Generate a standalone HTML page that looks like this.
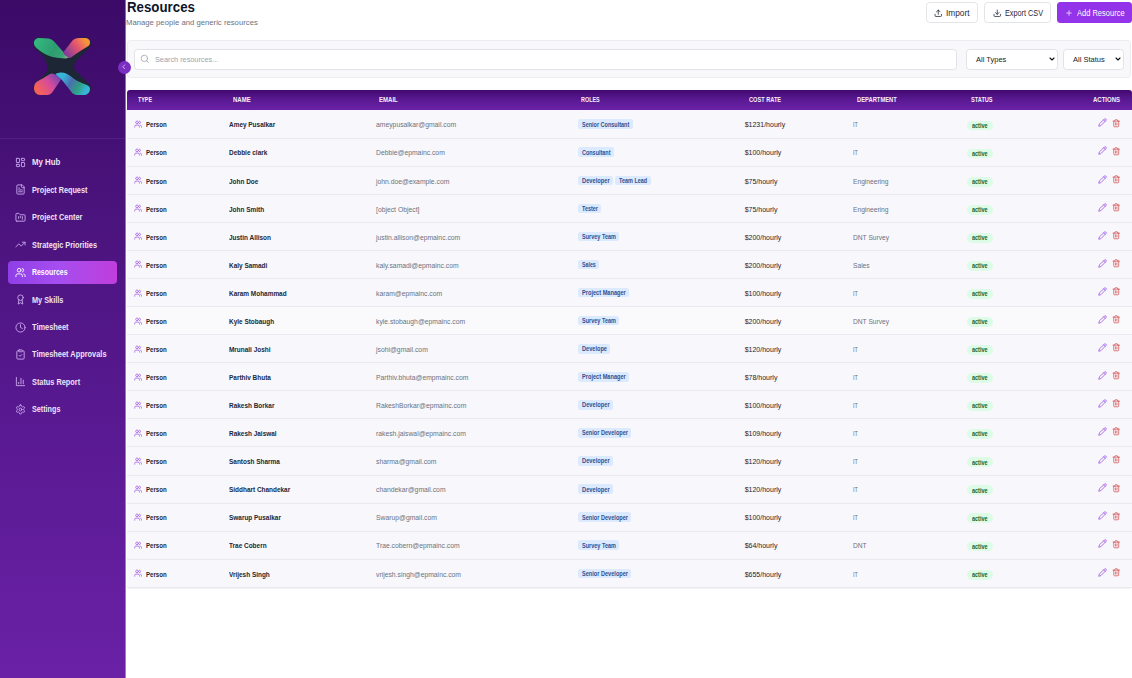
<!DOCTYPE html>
<html><head><meta charset="utf-8"><title>Resources</title>
<style>
html,body{margin:0;padding:0;}
body{width:1132px;height:678px;overflow:hidden;position:relative;background:#ffffff;font-family:"Liberation Sans", sans-serif;}
svg{display:block;overflow:visible;}
</style></head><body>
<div style="position:absolute;left:0px;top:0px;width:125px;height:678px;background:linear-gradient(180deg,#3b0a67 0%,#4a137c 30%,#5a1a93 65%,#6a21a6 100%);"></div>
<div style="position:absolute;left:125px;top:0px;width:1px;height:678px;opacity:0.6;background:linear-gradient(180deg,#3b0a67 0%,#4a137c 30%,#5a1a93 65%,#6a21a6 100%);"></div>
<div style="position:absolute;left:0px;top:137.5px;width:125.2px;height:1px;background:rgba(255,255,255,0.07);"></div>
<svg style="position:absolute;left:30px;top:34px" width="64" height="64" viewBox="0 0 64 64">
<defs>
<linearGradient id="gtl" gradientUnits="userSpaceOnUse" x1="6" y1="6" x2="38" y2="24"><stop offset="0" stop-color="#34b880"/><stop offset="0.55" stop-color="#2d9c70"/><stop offset="0.85" stop-color="#3aa678"/><stop offset="1" stop-color="#9fb08a"/></linearGradient>
<linearGradient id="gtr" gradientUnits="userSpaceOnUse" x1="58" y1="6" x2="36" y2="22"><stop offset="0.08" stop-color="#f7963a"/><stop offset="0.45" stop-color="#e6566e"/><stop offset="1" stop-color="#7c3aa0"/></linearGradient>
<linearGradient id="gbl" gradientUnits="userSpaceOnUse" x1="7" y1="58" x2="29" y2="41"><stop offset="0.08" stop-color="#f4615d"/><stop offset="0.55" stop-color="#d44b9c"/><stop offset="1" stop-color="#6c46b2"/></linearGradient>
<linearGradient id="gbr" gradientUnits="userSpaceOnUse" x1="58" y1="58" x2="27" y2="40"><stop offset="0.08" stop-color="#37b4d8"/><stop offset="0.3" stop-color="#2f9f80"/><stop offset="0.55" stop-color="#4a6fb0"/><stop offset="0.8" stop-color="#38b2d8"/><stop offset="1" stop-color="#38b8d8"/></linearGradient>
</defs>
<path d="M9.5 9.5 L54.5 54.5 M54.5 9.5 L9.5 54.5" stroke="#1d2635" stroke-width="13" stroke-linecap="round"/>
<path d="M11 17 L26 23 L40 23 L57 11 Q35 30 50 50 L40 44 L24 40 L15 47 Q21 32 11 17Z" fill="#1d2635"/>
<path d="M4 9 C4 5.5 6.5 4 9.5 4 L18.5 4.5 C21 4.8 23 6.5 25 8.5 L32 16.5 C34 18.5 37 20.5 41 22.5 L36 24.5 C30 24.5 24 23.8 18 21.5 C14 20 10 17 6.5 14 C4.8 12.5 4 11 4 9Z" fill="url(#gtl)"/>
<path d="M60 8.5 C60 5.5 58 4 55 4 L49 4 C46 4 44 5 42.5 6.5 L33 18.5 C34 21 37 23 40 24 L41 23.5 C46 20 51 16 56 13.5 C58.5 12.3 60 11 60 8.5Z" fill="url(#gtr)"/>
<path d="M4 54.5 C4 58 6.5 61 10 61 L17 61 C19.5 61 21 60 22.5 58 L31 45.5 C29 42 26 40 22 39.5 L20 40 C15 43 10 46 6.5 48 C4.8 49.5 4 51.5 4 54.5Z" fill="url(#gbl)"/>
<path d="M60 55 C60 58.5 57.5 61 54 61 L47 61 C44.5 61 42.5 59.5 41 57.5 L32 46 C29.5 43.5 27 41.5 25.5 40 C29 38 33 38 36 39.5 C40 41.5 43 44 46.5 46.5 L53 49.5 C57 51 60 52 60 55Z" fill="url(#gbr)"/>
</svg>
<svg style="position:absolute;left:15.20px;top:156.80px;" width="11" height="11" viewBox="0 0 24 24" fill="none" stroke="#c9a6ee" stroke-width="2" stroke-linecap="round" stroke-linejoin="round"><rect width="7" height="9" x="3" y="3" rx="1"/><rect width="7" height="5" x="14" y="3" rx="1"/><rect width="7" height="9" x="14" y="12" rx="1"/><rect width="7" height="5" x="3" y="16" rx="1"/></svg>
<div style="position:absolute;left:31.60px;top:159px;font-size:8.2px;line-height:8.2px;font-weight:700;color:#ede3f7;white-space:nowrap;transform-origin:0 0;transform:scaleX(0.9602);">My Hub</div>
<svg style="position:absolute;left:15.20px;top:184.25px;" width="11" height="11" viewBox="0 0 24 24" fill="none" stroke="#c9a6ee" stroke-width="2" stroke-linecap="round" stroke-linejoin="round"><path d="M15 2H6a2 2 0 0 0-2 2v16a2 2 0 0 0 2 2h12a2 2 0 0 0 2-2V7Z"/><path d="M14 2v4a2 2 0 0 0 2 2h4"/><path d="M10 9H8"/><path d="M16 13H8"/><path d="M16 17H8"/></svg>
<div style="position:absolute;left:31.60px;top:187px;font-size:8.2px;line-height:8.2px;font-weight:700;color:#ede3f7;white-space:nowrap;transform-origin:0 0;transform:scaleX(0.8886);">Project Request</div>
<svg style="position:absolute;left:15.20px;top:211.70px;" width="11" height="11" viewBox="0 0 24 24" fill="none" stroke="#c9a6ee" stroke-width="2" stroke-linecap="round" stroke-linejoin="round"><path d="M4 20h16a2 2 0 0 0 2-2V8a2 2 0 0 0-2-2h-7.93a2 2 0 0 1-1.66-.9l-.82-1.2A2 2 0 0 0 7.93 3H4a2 2 0 0 0-2 2v13c0 1.1.9 2 2 2Z"/><path d="M8 10v4"/><path d="M12 10v2"/><path d="M16 10v6"/></svg>
<div style="position:absolute;left:31.60px;top:214px;font-size:8.2px;line-height:8.2px;font-weight:700;color:#ede3f7;white-space:nowrap;transform-origin:0 0;transform:scaleX(0.9005);">Project Center</div>
<svg style="position:absolute;left:15.20px;top:239.15px;" width="11" height="11" viewBox="0 0 24 24" fill="none" stroke="#c9a6ee" stroke-width="2" stroke-linecap="round" stroke-linejoin="round"><polyline points="22 7 13.5 15.5 8.5 10.5 2 17"/><polyline points="16 7 22 7 22 13"/></svg>
<div style="position:absolute;left:31.60px;top:242px;font-size:8.2px;line-height:8.2px;font-weight:700;color:#ede3f7;white-space:nowrap;transform-origin:0 0;transform:scaleX(0.8927);">Strategic Priorities</div>
<div style="position:absolute;left:8px;top:260.6px;width:109px;height:23.3px;border-radius:4px;background:linear-gradient(90deg,#8f3ee6 0%,#a54ef0 45%,#c03edc 100%);"></div>
<svg style="position:absolute;left:15.20px;top:266.60px;" width="11" height="11" viewBox="0 0 24 24" fill="none" stroke="#ffffff" stroke-width="2" stroke-linecap="round" stroke-linejoin="round"><path d="M16 21v-2a4 4 0 0 0-4-4H6a4 4 0 0 0-4 4v2"/><circle cx="9" cy="7" r="4"/><path d="M22 21v-2a4 4 0 0 0-3-3.87"/><path d="M16 3.13a4 4 0 0 1 0 7.75"/></svg>
<div style="position:absolute;left:31.60px;top:269px;font-size:8.2px;line-height:8.2px;font-weight:700;color:#ffffff;white-space:nowrap;transform-origin:0 0;transform:scaleX(0.8478);">Resources</div>
<svg style="position:absolute;left:15.20px;top:294.05px;" width="11" height="11" viewBox="0 0 24 24" fill="none" stroke="#c9a6ee" stroke-width="2" stroke-linecap="round" stroke-linejoin="round"><circle cx="12" cy="8" r="6"/><path d="M15.477 12.89 17 22l-5-3-5 3 1.523-9.11"/></svg>
<div style="position:absolute;left:31.60px;top:297px;font-size:8.2px;line-height:8.2px;font-weight:700;color:#ede3f7;white-space:nowrap;transform-origin:0 0;transform:scaleX(0.8931);">My Skills</div>
<svg style="position:absolute;left:15.20px;top:321.50px;" width="11" height="11" viewBox="0 0 24 24" fill="none" stroke="#c9a6ee" stroke-width="2" stroke-linecap="round" stroke-linejoin="round"><circle cx="12" cy="12" r="10"/><polyline points="12 6 12 12 16 14"/></svg>
<div style="position:absolute;left:31.60px;top:324px;font-size:8.2px;line-height:8.2px;font-weight:700;color:#ede3f7;white-space:nowrap;transform-origin:0 0;transform:scaleX(0.9044);">Timesheet</div>
<svg style="position:absolute;left:15.20px;top:348.95px;" width="11" height="11" viewBox="0 0 24 24" fill="none" stroke="#c9a6ee" stroke-width="2" stroke-linecap="round" stroke-linejoin="round"><rect width="8" height="4" x="8" y="2" rx="1" ry="1"/><path d="M16 4h2a2 2 0 0 1 2 2v14a2 2 0 0 1-2 2H6a2 2 0 0 1-2-2V6a2 2 0 0 1 2-2h2"/><path d="m9 14 2 2 4-4"/></svg>
<div style="position:absolute;left:31.60px;top:351px;font-size:8.2px;line-height:8.2px;font-weight:700;color:#ede3f7;white-space:nowrap;transform-origin:0 0;transform:scaleX(0.9046);">Timesheet Approvals</div>
<svg style="position:absolute;left:15.20px;top:376.40px;" width="11" height="11" viewBox="0 0 24 24" fill="none" stroke="#c9a6ee" stroke-width="2" stroke-linecap="round" stroke-linejoin="round"><path d="M3 3v18h18"/><path d="M18 17V9"/><path d="M13 17V5"/><path d="M8 17v-3"/></svg>
<div style="position:absolute;left:31.60px;top:379px;font-size:8.2px;line-height:8.2px;font-weight:700;color:#ede3f7;white-space:nowrap;transform-origin:0 0;transform:scaleX(0.8959);">Status Report</div>
<svg style="position:absolute;left:15.20px;top:403.85px;" width="11" height="11" viewBox="0 0 24 24" fill="none" stroke="#c9a6ee" stroke-width="2" stroke-linecap="round" stroke-linejoin="round"><path d="M12.22 2h-.44a2 2 0 0 0-2 2v.18a2 2 0 0 1-1 1.73l-.43.25a2 2 0 0 1-2 0l-.15-.08a2 2 0 0 0-2.73.73l-.22.38a2 2 0 0 0 .73 2.73l.15.1a2 2 0 0 1 1 1.72v.51a2 2 0 0 1-1 1.74l-.15.09a2 2 0 0 0-.73 2.73l.22.38a2 2 0 0 0 2.73.73l.15-.08a2 2 0 0 1 2 0l.43.25a2 2 0 0 1 1 1.73V20a2 2 0 0 0 2 2h.44a2 2 0 0 0 2-2v-.18a2 2 0 0 1 1-1.73l.43-.25a2 2 0 0 1 2 0l.15.08a2 2 0 0 0 2.73-.73l.22-.39a2 2 0 0 0-.73-2.73l-.15-.08a2 2 0 0 1-1-1.74v-.5a2 2 0 0 1 1-1.74l.15-.09a2 2 0 0 0 .73-2.73l-.22-.38a2 2 0 0 0-2.73-.73l-.15.08a2 2 0 0 1-2 0l-.43-.25a2 2 0 0 1-1-1.73V4a2 2 0 0 0-2-2z"/><circle cx="12" cy="12" r="3"/></svg>
<div style="position:absolute;left:31.60px;top:406px;font-size:8.2px;line-height:8.2px;font-weight:700;color:#ede3f7;white-space:nowrap;transform-origin:0 0;transform:scaleX(0.8789);">Settings</div>
<div style="position:absolute;left:126.60px;top:1px;font-size:13.8px;line-height:13.8px;font-weight:700;color:#0f1629;white-space:nowrap;transform-origin:0 0;transform:scaleX(0.9623);">Resources</div>
<div style="position:absolute;left:126.40px;top:19px;font-size:8.0px;line-height:8.0px;font-weight:400;color:#6b7280;white-space:nowrap;transform-origin:0 0;transform:scaleX(0.9652);">Manage people and generic resources</div>
<div style="position:absolute;left:926.2px;top:2.2px;width:52.2px;height:20.6px;box-sizing:border-box;border:1px solid #e3e4e8;border-radius:3.5px;background:#fff;"></div>
<svg style="position:absolute;left:934.20px;top:9.30px;" width="8.5" height="8.5" viewBox="0 0 24 24" fill="none" stroke="#1f2937" stroke-width="2.2" stroke-linecap="round" stroke-linejoin="round"><path d="M21 15v4a2 2 0 0 1-2 2H5a2 2 0 0 1-2-2v-4"/><polyline points="17 8 12 3 7 8"/><line x1="12" x2="12" y1="3" y2="15"/></svg>
<div style="position:absolute;left:946.20px;top:9px;font-size:8.5px;line-height:8.5px;font-weight:400;color:#1f2937;white-space:nowrap;transform-origin:0 0;transform:scaleX(0.9754);">Import</div>
<div style="position:absolute;left:984.4px;top:2.2px;width:66.3px;height:20.6px;box-sizing:border-box;border:1px solid #e3e4e8;border-radius:3.5px;background:#fff;"></div>
<svg style="position:absolute;left:992.60px;top:9.30px;" width="8.5" height="8.5" viewBox="0 0 24 24" fill="none" stroke="#1f2937" stroke-width="2.2" stroke-linecap="round" stroke-linejoin="round"><path d="M21 15v4a2 2 0 0 1-2 2H5a2 2 0 0 1-2-2v-4"/><polyline points="7 10 12 15 17 10"/><line x1="12" x2="12" y1="15" y2="3"/></svg>
<div style="position:absolute;left:1004.70px;top:9px;font-size:8.5px;line-height:8.5px;font-weight:400;color:#1f2937;white-space:nowrap;transform-origin:0 0;transform:scaleX(0.8557);">Export CSV</div>
<div style="position:absolute;left:1057.1px;top:2.2px;width:74.6px;height:20.6px;border-radius:3.5px;background:#9333ea;"></div>
<svg style="position:absolute;left:1064.60px;top:8.70px;" width="8" height="8" viewBox="0 0 24 24" fill="none" stroke="#ffffff" stroke-width="2" stroke-linecap="round" stroke-linejoin="round"><path d="M5 12h14"/><path d="M12 5v14"/></svg>
<div style="position:absolute;left:1077.00px;top:9px;font-size:8.5px;line-height:8.5px;font-weight:400;color:#ffffff;white-space:nowrap;transform-origin:0 0;transform:scaleX(0.8835);">Add Resource</div>
<div style="position:absolute;left:127.3px;top:40.3px;width:1003.7px;height:37.6px;box-sizing:border-box;border:1px solid #ececf1;border-radius:3.5px;background:#f8f8fb;"></div>
<div style="position:absolute;left:134.3px;top:49.1px;width:822.7px;height:20.6px;box-sizing:border-box;border:1px solid #e2e2e8;border-radius:3.5px;background:#fff;"></div>
<svg style="position:absolute;left:140.30px;top:54.20px;" width="9.6" height="9.6" viewBox="0 0 24 24" fill="none" stroke="#9ca3af" stroke-width="2" stroke-linecap="round" stroke-linejoin="round"><circle cx="11" cy="11" r="8"/><path d="m21 21-4.3-4.3"/></svg>
<div style="position:absolute;left:154.80px;top:56px;font-size:8.0px;line-height:8.0px;font-weight:400;color:#9ca3af;white-space:nowrap;transform-origin:0 0;transform:scaleX(0.9124);">Search resources...</div>
<div style="position:absolute;left:965.6px;top:49.1px;width:92.2px;height:20.5px;box-sizing:border-box;border:1px solid #e2e2e8;border-radius:3.5px;background:#fff;"></div>
<div style="position:absolute;left:975.80px;top:56px;font-size:8.0px;line-height:8.0px;font-weight:400;color:#222222;white-space:nowrap;transform-origin:0 0;transform:scaleX(0.9377);">All Types</div>
<svg style="position:absolute;left:1047.80px;top:54.60px;" width="8" height="8" viewBox="0 0 24 24" fill="none" stroke="#111111" stroke-width="3.2" stroke-linecap="round" stroke-linejoin="round"><path d="m6 9 6 6 6-6"/></svg>
<div style="position:absolute;left:1062.5px;top:49.1px;width:61.5px;height:20.5px;box-sizing:border-box;border:1px solid #e2e2e8;border-radius:3.5px;background:#fff;"></div>
<div style="position:absolute;left:1072.70px;top:56px;font-size:8.0px;line-height:8.0px;font-weight:400;color:#222222;white-space:nowrap;transform-origin:0 0;transform:scaleX(0.9409);">All Status</div>
<svg style="position:absolute;left:1113.80px;top:54.60px;" width="8" height="8" viewBox="0 0 24 24" fill="none" stroke="#111111" stroke-width="3.2" stroke-linecap="round" stroke-linejoin="round"><path d="m6 9 6 6 6-6"/></svg>
<div style="position:absolute;left:127px;top:90px;width:1004.5999999999999px;height:20px;border-radius:3px 3px 0 0;background:linear-gradient(180deg,#42096f 0%,#5a1a93 50%,#6a21a6 100%);"></div>
<div style="position:absolute;left:138.40px;top:97px;font-size:6.6px;line-height:6.6px;font-weight:700;color:#f6effc;white-space:nowrap;transform-origin:0 0;transform:scaleX(0.8123);">TYPE</div>
<div style="position:absolute;left:232.70px;top:97px;font-size:6.6px;line-height:6.6px;font-weight:700;color:#f6effc;white-space:nowrap;transform-origin:0 0;transform:scaleX(0.9113);">NAME</div>
<div style="position:absolute;left:379.10px;top:97px;font-size:6.6px;line-height:6.6px;font-weight:700;color:#f6effc;white-space:nowrap;transform-origin:0 0;transform:scaleX(0.9164);">EMAIL</div>
<div style="position:absolute;left:581.20px;top:97px;font-size:6.6px;line-height:6.6px;font-weight:700;color:#f6effc;white-space:nowrap;transform-origin:0 0;transform:scaleX(0.8231);">ROLES</div>
<div style="position:absolute;left:748.70px;top:97px;font-size:6.6px;line-height:6.6px;font-weight:700;color:#f6effc;white-space:nowrap;transform-origin:0 0;transform:scaleX(0.8535);">COST RATE</div>
<div style="position:absolute;left:856.60px;top:97px;font-size:6.6px;line-height:6.6px;font-weight:700;color:#f6effc;white-space:nowrap;transform-origin:0 0;transform:scaleX(0.8783);">DEPARTMENT</div>
<div style="position:absolute;left:971.40px;top:97px;font-size:6.6px;line-height:6.6px;font-weight:700;color:#f6effc;white-space:nowrap;transform-origin:0 0;transform:scaleX(0.8502);">STATUS</div>
<div style="position:absolute;left:1093.00px;top:97px;font-size:6.6px;line-height:6.6px;font-weight:700;color:#f6effc;white-space:nowrap;transform-origin:0 0;transform:scaleX(0.9100);">ACTIONS</div>
<div style="position:absolute;left:127px;top:110px;width:1004.5999999999999px;height:477.8px;border-radius:0 0 3px 3px;background:#f8f7fb;box-shadow:0 1px 1px rgba(0,0,0,0.06);"></div>
<div style="position:absolute;left:127px;top:138px;width:1004.5999999999999px;height:1px;background:#ebe8f0;"></div>
<svg style="position:absolute;left:134.00px;top:120.10px;" width="8.2" height="8.2" viewBox="0 0 24 24" fill="none" stroke="#a862ea" stroke-width="2.4" stroke-linecap="round" stroke-linejoin="round"><path d="M16 21v-2a4 4 0 0 0-4-4H6a4 4 0 0 0-4 4v2"/><circle cx="9" cy="7" r="4"/><path d="M22 21v-2a4 4 0 0 0-3-3.87"/><path d="M16 3.13a4 4 0 0 1 0 7.75"/></svg>
<div style="position:absolute;left:146.40px;top:121px;font-size:7.0px;line-height:7.0px;font-weight:700;color:#232836;white-space:nowrap;transform-origin:0 0;transform:scaleX(0.8720);">Person</div>
<div style="position:absolute;left:228.90px;top:121px;font-size:7.0px;line-height:7.0px;font-weight:700;color:#232836;white-space:nowrap;transform-origin:0 0;transform:scaleX(0.9200);">Amey Pusalkar</div>
<div style="position:absolute;left:375.50px;top:121px;font-size:7.0px;line-height:7.0px;font-weight:400;color:#6b7280;white-space:nowrap;transform-origin:0 0;transform:scaleX(0.9700);">ameypusalkar@gmail.com</div>
<div style="position:absolute;left:577.6px;top:119.4px;width:55.1px;height:9.6px;border-radius:2.5px;background:#dbeafe;"></div>
<div style="position:absolute;left:581.50px;top:122px;font-size:6.6px;line-height:6.6px;font-weight:700;color:#33508f;white-space:nowrap;transform-origin:0 0;transform:scaleX(0.8330);">Senior Consultant</div>
<div style="position:absolute;left:744.70px;top:121px;font-size:7.0px;line-height:7.0px;font-weight:400;color:#1f2430;white-space:nowrap;transform-origin:0 0;transform:scaleX(1.0000);">$1231/hourly</div>
<div style="position:absolute;left:852.80px;top:121px;font-size:7.0px;line-height:7.0px;font-weight:400;color:#6b7280;white-space:nowrap;transform-origin:0 0;transform:scaleX(0.7900);">IT</div>
<div style="position:absolute;left:967.2px;top:120.5px;width:25.4px;height:9.9px;border-radius:5px;background:#dcfce7;"></div>
<div style="position:absolute;left:972.40px;top:123px;font-size:6.6px;line-height:6.6px;font-weight:700;color:#166534;white-space:nowrap;transform-origin:0 0;transform:scaleX(0.8341);">active</div>
<svg style="position:absolute;left:1098.20px;top:118.40px;" width="9" height="9" viewBox="0 0 24 24" fill="none" stroke="#9747e0" stroke-width="2" stroke-linecap="round" stroke-linejoin="round"><path d="M17 3a2.85 2.83 0 1 1 4 4L7.5 20.5 2 22l1.5-5.5Z"/><path d="m15 5 4 4"/></svg>
<svg style="position:absolute;left:1112.30px;top:118.60px;" width="8.5" height="8.5" viewBox="0 0 24 24" fill="none" stroke="#d24a4a" stroke-width="2" stroke-linecap="round" stroke-linejoin="round"><path d="M3 6h18"/><path d="M19 6v14c0 1-1 2-2 2H7c-1 0-2-1-2-2V6"/><path d="M8 6V4c0-1 1-2 2-2h4c1 0 2 1 2 2v2"/><line x1="10" x2="10" y1="11" y2="17"/><line x1="14" x2="14" y1="11" y2="17"/></svg>
<div style="position:absolute;left:127px;top:166px;width:1004.5999999999999px;height:1px;background:#ebe8f0;"></div>
<svg style="position:absolute;left:134.00px;top:148.17px;" width="8.2" height="8.2" viewBox="0 0 24 24" fill="none" stroke="#a862ea" stroke-width="2.4" stroke-linecap="round" stroke-linejoin="round"><path d="M16 21v-2a4 4 0 0 0-4-4H6a4 4 0 0 0-4 4v2"/><circle cx="9" cy="7" r="4"/><path d="M22 21v-2a4 4 0 0 0-3-3.87"/><path d="M16 3.13a4 4 0 0 1 0 7.75"/></svg>
<div style="position:absolute;left:146.40px;top:149px;font-size:7.0px;line-height:7.0px;font-weight:700;color:#232836;white-space:nowrap;transform-origin:0 0;transform:scaleX(0.8720);">Person</div>
<div style="position:absolute;left:228.90px;top:149px;font-size:7.0px;line-height:7.0px;font-weight:700;color:#232836;white-space:nowrap;transform-origin:0 0;transform:scaleX(0.9200);">Debbie clark</div>
<div style="position:absolute;left:375.50px;top:149px;font-size:7.0px;line-height:7.0px;font-weight:400;color:#6b7280;white-space:nowrap;transform-origin:0 0;transform:scaleX(0.9700);">Debbie@epmainc.com</div>
<div style="position:absolute;left:577.6px;top:147.47px;width:36.3px;height:9.6px;border-radius:2.5px;background:#dbeafe;"></div>
<div style="position:absolute;left:581.50px;top:150px;font-size:6.6px;line-height:6.6px;font-weight:700;color:#33508f;white-space:nowrap;transform-origin:0 0;transform:scaleX(0.8276);">Consultant</div>
<div style="position:absolute;left:744.70px;top:149px;font-size:7.0px;line-height:7.0px;font-weight:400;color:#1f2430;white-space:nowrap;transform-origin:0 0;transform:scaleX(1.0000);">$100/hourly</div>
<div style="position:absolute;left:852.80px;top:149px;font-size:7.0px;line-height:7.0px;font-weight:400;color:#6b7280;white-space:nowrap;transform-origin:0 0;transform:scaleX(0.7900);">IT</div>
<div style="position:absolute;left:967.2px;top:148.57000000000002px;width:25.4px;height:9.9px;border-radius:5px;background:#dcfce7;"></div>
<div style="position:absolute;left:972.40px;top:151px;font-size:6.6px;line-height:6.6px;font-weight:700;color:#166534;white-space:nowrap;transform-origin:0 0;transform:scaleX(0.8341);">active</div>
<svg style="position:absolute;left:1098.20px;top:146.47px;" width="9" height="9" viewBox="0 0 24 24" fill="none" stroke="#9747e0" stroke-width="2" stroke-linecap="round" stroke-linejoin="round"><path d="M17 3a2.85 2.83 0 1 1 4 4L7.5 20.5 2 22l1.5-5.5Z"/><path d="m15 5 4 4"/></svg>
<svg style="position:absolute;left:1112.30px;top:146.67px;" width="8.5" height="8.5" viewBox="0 0 24 24" fill="none" stroke="#d24a4a" stroke-width="2" stroke-linecap="round" stroke-linejoin="round"><path d="M3 6h18"/><path d="M19 6v14c0 1-1 2-2 2H7c-1 0-2-1-2-2V6"/><path d="M8 6V4c0-1 1-2 2-2h4c1 0 2 1 2 2v2"/><line x1="10" x2="10" y1="11" y2="17"/><line x1="14" x2="14" y1="11" y2="17"/></svg>
<div style="position:absolute;left:127px;top:194px;width:1004.5999999999999px;height:1px;background:#ebe8f0;"></div>
<svg style="position:absolute;left:134.00px;top:176.24px;" width="8.2" height="8.2" viewBox="0 0 24 24" fill="none" stroke="#a862ea" stroke-width="2.4" stroke-linecap="round" stroke-linejoin="round"><path d="M16 21v-2a4 4 0 0 0-4-4H6a4 4 0 0 0-4 4v2"/><circle cx="9" cy="7" r="4"/><path d="M22 21v-2a4 4 0 0 0-3-3.87"/><path d="M16 3.13a4 4 0 0 1 0 7.75"/></svg>
<div style="position:absolute;left:146.40px;top:178px;font-size:7.0px;line-height:7.0px;font-weight:700;color:#232836;white-space:nowrap;transform-origin:0 0;transform:scaleX(0.8720);">Person</div>
<div style="position:absolute;left:228.90px;top:178px;font-size:7.0px;line-height:7.0px;font-weight:700;color:#232836;white-space:nowrap;transform-origin:0 0;transform:scaleX(0.9200);">John Doe</div>
<div style="position:absolute;left:375.50px;top:178px;font-size:7.0px;line-height:7.0px;font-weight:400;color:#6b7280;white-space:nowrap;transform-origin:0 0;transform:scaleX(0.9700);">john.doe@example.com</div>
<div style="position:absolute;left:577.6px;top:175.54px;width:35.5px;height:9.6px;border-radius:2.5px;background:#dbeafe;"></div>
<div style="position:absolute;left:581.50px;top:178px;font-size:6.6px;line-height:6.6px;font-weight:700;color:#33508f;white-space:nowrap;transform-origin:0 0;transform:scaleX(0.8686);">Developer</div>
<div style="position:absolute;left:614.9px;top:175.54px;width:36px;height:9.6px;border-radius:2.5px;background:#dbeafe;"></div>
<div style="position:absolute;left:618.80px;top:178px;font-size:6.6px;line-height:6.6px;font-weight:700;color:#33508f;white-space:nowrap;transform-origin:0 0;transform:scaleX(0.8302);">Team Lead</div>
<div style="position:absolute;left:744.70px;top:178px;font-size:7.0px;line-height:7.0px;font-weight:400;color:#1f2430;white-space:nowrap;transform-origin:0 0;transform:scaleX(1.0000);">$75/hourly</div>
<div style="position:absolute;left:852.80px;top:178px;font-size:7.0px;line-height:7.0px;font-weight:400;color:#6b7280;white-space:nowrap;transform-origin:0 0;transform:scaleX(0.9500);">Engineering</div>
<div style="position:absolute;left:967.2px;top:176.64000000000001px;width:25.4px;height:9.9px;border-radius:5px;background:#dcfce7;"></div>
<div style="position:absolute;left:972.40px;top:179px;font-size:6.6px;line-height:6.6px;font-weight:700;color:#166534;white-space:nowrap;transform-origin:0 0;transform:scaleX(0.8341);">active</div>
<svg style="position:absolute;left:1098.20px;top:174.54px;" width="9" height="9" viewBox="0 0 24 24" fill="none" stroke="#9747e0" stroke-width="2" stroke-linecap="round" stroke-linejoin="round"><path d="M17 3a2.85 2.83 0 1 1 4 4L7.5 20.5 2 22l1.5-5.5Z"/><path d="m15 5 4 4"/></svg>
<svg style="position:absolute;left:1112.30px;top:174.74px;" width="8.5" height="8.5" viewBox="0 0 24 24" fill="none" stroke="#d24a4a" stroke-width="2" stroke-linecap="round" stroke-linejoin="round"><path d="M3 6h18"/><path d="M19 6v14c0 1-1 2-2 2H7c-1 0-2-1-2-2V6"/><path d="M8 6V4c0-1 1-2 2-2h4c1 0 2 1 2 2v2"/><line x1="10" x2="10" y1="11" y2="17"/><line x1="14" x2="14" y1="11" y2="17"/></svg>
<div style="position:absolute;left:127px;top:222px;width:1004.5999999999999px;height:1px;background:#ebe8f0;"></div>
<svg style="position:absolute;left:134.00px;top:204.31px;" width="8.2" height="8.2" viewBox="0 0 24 24" fill="none" stroke="#a862ea" stroke-width="2.4" stroke-linecap="round" stroke-linejoin="round"><path d="M16 21v-2a4 4 0 0 0-4-4H6a4 4 0 0 0-4 4v2"/><circle cx="9" cy="7" r="4"/><path d="M22 21v-2a4 4 0 0 0-3-3.87"/><path d="M16 3.13a4 4 0 0 1 0 7.75"/></svg>
<div style="position:absolute;left:146.40px;top:206px;font-size:7.0px;line-height:7.0px;font-weight:700;color:#232836;white-space:nowrap;transform-origin:0 0;transform:scaleX(0.8720);">Person</div>
<div style="position:absolute;left:228.90px;top:206px;font-size:7.0px;line-height:7.0px;font-weight:700;color:#232836;white-space:nowrap;transform-origin:0 0;transform:scaleX(0.9200);">John Smith</div>
<div style="position:absolute;left:375.50px;top:206px;font-size:7.0px;line-height:7.0px;font-weight:400;color:#6b7280;white-space:nowrap;transform-origin:0 0;transform:scaleX(0.9700);">[object Object]</div>
<div style="position:absolute;left:577.6px;top:203.61px;width:23.7px;height:9.6px;border-radius:2.5px;background:#dbeafe;"></div>
<div style="position:absolute;left:581.50px;top:206px;font-size:6.6px;line-height:6.6px;font-weight:700;color:#33508f;white-space:nowrap;transform-origin:0 0;transform:scaleX(0.8233);">Tester</div>
<div style="position:absolute;left:744.70px;top:206px;font-size:7.0px;line-height:7.0px;font-weight:400;color:#1f2430;white-space:nowrap;transform-origin:0 0;transform:scaleX(1.0000);">$75/hourly</div>
<div style="position:absolute;left:852.80px;top:206px;font-size:7.0px;line-height:7.0px;font-weight:400;color:#6b7280;white-space:nowrap;transform-origin:0 0;transform:scaleX(0.9500);">Engineering</div>
<div style="position:absolute;left:967.2px;top:204.71000000000004px;width:25.4px;height:9.9px;border-radius:5px;background:#dcfce7;"></div>
<div style="position:absolute;left:972.40px;top:207px;font-size:6.6px;line-height:6.6px;font-weight:700;color:#166534;white-space:nowrap;transform-origin:0 0;transform:scaleX(0.8341);">active</div>
<svg style="position:absolute;left:1098.20px;top:202.61px;" width="9" height="9" viewBox="0 0 24 24" fill="none" stroke="#9747e0" stroke-width="2" stroke-linecap="round" stroke-linejoin="round"><path d="M17 3a2.85 2.83 0 1 1 4 4L7.5 20.5 2 22l1.5-5.5Z"/><path d="m15 5 4 4"/></svg>
<svg style="position:absolute;left:1112.30px;top:202.81px;" width="8.5" height="8.5" viewBox="0 0 24 24" fill="none" stroke="#d24a4a" stroke-width="2" stroke-linecap="round" stroke-linejoin="round"><path d="M3 6h18"/><path d="M19 6v14c0 1-1 2-2 2H7c-1 0-2-1-2-2V6"/><path d="M8 6V4c0-1 1-2 2-2h4c1 0 2 1 2 2v2"/><line x1="10" x2="10" y1="11" y2="17"/><line x1="14" x2="14" y1="11" y2="17"/></svg>
<div style="position:absolute;left:127px;top:250px;width:1004.5999999999999px;height:1px;background:#ebe8f0;"></div>
<svg style="position:absolute;left:134.00px;top:232.38px;" width="8.2" height="8.2" viewBox="0 0 24 24" fill="none" stroke="#a862ea" stroke-width="2.4" stroke-linecap="round" stroke-linejoin="round"><path d="M16 21v-2a4 4 0 0 0-4-4H6a4 4 0 0 0-4 4v2"/><circle cx="9" cy="7" r="4"/><path d="M22 21v-2a4 4 0 0 0-3-3.87"/><path d="M16 3.13a4 4 0 0 1 0 7.75"/></svg>
<div style="position:absolute;left:146.40px;top:234px;font-size:7.0px;line-height:7.0px;font-weight:700;color:#232836;white-space:nowrap;transform-origin:0 0;transform:scaleX(0.8720);">Person</div>
<div style="position:absolute;left:228.90px;top:234px;font-size:7.0px;line-height:7.0px;font-weight:700;color:#232836;white-space:nowrap;transform-origin:0 0;transform:scaleX(0.9200);">Justin Allison</div>
<div style="position:absolute;left:375.50px;top:234px;font-size:7.0px;line-height:7.0px;font-weight:400;color:#6b7280;white-space:nowrap;transform-origin:0 0;transform:scaleX(0.9700);">justin.allison@epmainc.com</div>
<div style="position:absolute;left:577.6px;top:231.68px;width:41.8px;height:9.6px;border-radius:2.5px;background:#dbeafe;"></div>
<div style="position:absolute;left:581.50px;top:234px;font-size:6.6px;line-height:6.6px;font-weight:700;color:#33508f;white-space:nowrap;transform-origin:0 0;transform:scaleX(0.8382);">Survey Team</div>
<div style="position:absolute;left:744.70px;top:234px;font-size:7.0px;line-height:7.0px;font-weight:400;color:#1f2430;white-space:nowrap;transform-origin:0 0;transform:scaleX(1.0000);">$200/hourly</div>
<div style="position:absolute;left:852.80px;top:234px;font-size:7.0px;line-height:7.0px;font-weight:400;color:#6b7280;white-space:nowrap;transform-origin:0 0;transform:scaleX(0.9500);">DNT Survey</div>
<div style="position:absolute;left:967.2px;top:232.78000000000003px;width:25.4px;height:9.9px;border-radius:5px;background:#dcfce7;"></div>
<div style="position:absolute;left:972.40px;top:235px;font-size:6.6px;line-height:6.6px;font-weight:700;color:#166534;white-space:nowrap;transform-origin:0 0;transform:scaleX(0.8341);">active</div>
<svg style="position:absolute;left:1098.20px;top:230.68px;" width="9" height="9" viewBox="0 0 24 24" fill="none" stroke="#9747e0" stroke-width="2" stroke-linecap="round" stroke-linejoin="round"><path d="M17 3a2.85 2.83 0 1 1 4 4L7.5 20.5 2 22l1.5-5.5Z"/><path d="m15 5 4 4"/></svg>
<svg style="position:absolute;left:1112.30px;top:230.88px;" width="8.5" height="8.5" viewBox="0 0 24 24" fill="none" stroke="#d24a4a" stroke-width="2" stroke-linecap="round" stroke-linejoin="round"><path d="M3 6h18"/><path d="M19 6v14c0 1-1 2-2 2H7c-1 0-2-1-2-2V6"/><path d="M8 6V4c0-1 1-2 2-2h4c1 0 2 1 2 2v2"/><line x1="10" x2="10" y1="11" y2="17"/><line x1="14" x2="14" y1="11" y2="17"/></svg>
<div style="position:absolute;left:127px;top:278px;width:1004.5999999999999px;height:1px;background:#ebe8f0;"></div>
<svg style="position:absolute;left:134.00px;top:260.45px;" width="8.2" height="8.2" viewBox="0 0 24 24" fill="none" stroke="#a862ea" stroke-width="2.4" stroke-linecap="round" stroke-linejoin="round"><path d="M16 21v-2a4 4 0 0 0-4-4H6a4 4 0 0 0-4 4v2"/><circle cx="9" cy="7" r="4"/><path d="M22 21v-2a4 4 0 0 0-3-3.87"/><path d="M16 3.13a4 4 0 0 1 0 7.75"/></svg>
<div style="position:absolute;left:146.40px;top:262px;font-size:7.0px;line-height:7.0px;font-weight:700;color:#232836;white-space:nowrap;transform-origin:0 0;transform:scaleX(0.8720);">Person</div>
<div style="position:absolute;left:228.90px;top:262px;font-size:7.0px;line-height:7.0px;font-weight:700;color:#232836;white-space:nowrap;transform-origin:0 0;transform:scaleX(0.9200);">Kaly Samadi</div>
<div style="position:absolute;left:375.50px;top:262px;font-size:7.0px;line-height:7.0px;font-weight:400;color:#6b7280;white-space:nowrap;transform-origin:0 0;transform:scaleX(0.9700);">kaly.samadi@epmainc.com</div>
<div style="position:absolute;left:577.6px;top:259.75px;width:21.6px;height:9.6px;border-radius:2.5px;background:#dbeafe;"></div>
<div style="position:absolute;left:581.50px;top:262px;font-size:6.6px;line-height:6.6px;font-weight:700;color:#33508f;white-space:nowrap;transform-origin:0 0;transform:scaleX(0.8007);">Sales</div>
<div style="position:absolute;left:744.70px;top:262px;font-size:7.0px;line-height:7.0px;font-weight:400;color:#1f2430;white-space:nowrap;transform-origin:0 0;transform:scaleX(1.0000);">$200/hourly</div>
<div style="position:absolute;left:852.80px;top:262px;font-size:7.0px;line-height:7.0px;font-weight:400;color:#6b7280;white-space:nowrap;transform-origin:0 0;transform:scaleX(0.9500);">Sales</div>
<div style="position:absolute;left:967.2px;top:260.85px;width:25.4px;height:9.9px;border-radius:5px;background:#dcfce7;"></div>
<div style="position:absolute;left:972.40px;top:263px;font-size:6.6px;line-height:6.6px;font-weight:700;color:#166534;white-space:nowrap;transform-origin:0 0;transform:scaleX(0.8341);">active</div>
<svg style="position:absolute;left:1098.20px;top:258.75px;" width="9" height="9" viewBox="0 0 24 24" fill="none" stroke="#9747e0" stroke-width="2" stroke-linecap="round" stroke-linejoin="round"><path d="M17 3a2.85 2.83 0 1 1 4 4L7.5 20.5 2 22l1.5-5.5Z"/><path d="m15 5 4 4"/></svg>
<svg style="position:absolute;left:1112.30px;top:258.95px;" width="8.5" height="8.5" viewBox="0 0 24 24" fill="none" stroke="#d24a4a" stroke-width="2" stroke-linecap="round" stroke-linejoin="round"><path d="M3 6h18"/><path d="M19 6v14c0 1-1 2-2 2H7c-1 0-2-1-2-2V6"/><path d="M8 6V4c0-1 1-2 2-2h4c1 0 2 1 2 2v2"/><line x1="10" x2="10" y1="11" y2="17"/><line x1="14" x2="14" y1="11" y2="17"/></svg>
<div style="position:absolute;left:127px;top:306px;width:1004.5999999999999px;height:1px;background:#ebe8f0;"></div>
<svg style="position:absolute;left:134.00px;top:288.52px;" width="8.2" height="8.2" viewBox="0 0 24 24" fill="none" stroke="#a862ea" stroke-width="2.4" stroke-linecap="round" stroke-linejoin="round"><path d="M16 21v-2a4 4 0 0 0-4-4H6a4 4 0 0 0-4 4v2"/><circle cx="9" cy="7" r="4"/><path d="M22 21v-2a4 4 0 0 0-3-3.87"/><path d="M16 3.13a4 4 0 0 1 0 7.75"/></svg>
<div style="position:absolute;left:146.40px;top:290px;font-size:7.0px;line-height:7.0px;font-weight:700;color:#232836;white-space:nowrap;transform-origin:0 0;transform:scaleX(0.8720);">Person</div>
<div style="position:absolute;left:228.90px;top:290px;font-size:7.0px;line-height:7.0px;font-weight:700;color:#232836;white-space:nowrap;transform-origin:0 0;transform:scaleX(0.9200);">Karam Mohammad</div>
<div style="position:absolute;left:375.50px;top:290px;font-size:7.0px;line-height:7.0px;font-weight:400;color:#6b7280;white-space:nowrap;transform-origin:0 0;transform:scaleX(0.9700);">karam@epmainc.com</div>
<div style="position:absolute;left:577.6px;top:287.82px;width:51.6px;height:9.6px;border-radius:2.5px;background:#dbeafe;"></div>
<div style="position:absolute;left:581.50px;top:290px;font-size:6.6px;line-height:6.6px;font-weight:700;color:#33508f;white-space:nowrap;transform-origin:0 0;transform:scaleX(0.8536);">Project Manager</div>
<div style="position:absolute;left:744.70px;top:290px;font-size:7.0px;line-height:7.0px;font-weight:400;color:#1f2430;white-space:nowrap;transform-origin:0 0;transform:scaleX(1.0000);">$100/hourly</div>
<div style="position:absolute;left:852.80px;top:290px;font-size:7.0px;line-height:7.0px;font-weight:400;color:#6b7280;white-space:nowrap;transform-origin:0 0;transform:scaleX(0.7900);">IT</div>
<div style="position:absolute;left:967.2px;top:288.92px;width:25.4px;height:9.9px;border-radius:5px;background:#dcfce7;"></div>
<div style="position:absolute;left:972.40px;top:291px;font-size:6.6px;line-height:6.6px;font-weight:700;color:#166534;white-space:nowrap;transform-origin:0 0;transform:scaleX(0.8341);">active</div>
<svg style="position:absolute;left:1098.20px;top:286.82px;" width="9" height="9" viewBox="0 0 24 24" fill="none" stroke="#9747e0" stroke-width="2" stroke-linecap="round" stroke-linejoin="round"><path d="M17 3a2.85 2.83 0 1 1 4 4L7.5 20.5 2 22l1.5-5.5Z"/><path d="m15 5 4 4"/></svg>
<svg style="position:absolute;left:1112.30px;top:287.02px;" width="8.5" height="8.5" viewBox="0 0 24 24" fill="none" stroke="#d24a4a" stroke-width="2" stroke-linecap="round" stroke-linejoin="round"><path d="M3 6h18"/><path d="M19 6v14c0 1-1 2-2 2H7c-1 0-2-1-2-2V6"/><path d="M8 6V4c0-1 1-2 2-2h4c1 0 2 1 2 2v2"/><line x1="10" x2="10" y1="11" y2="17"/><line x1="14" x2="14" y1="11" y2="17"/></svg>
<div style="position:absolute;left:127px;top:307px;width:1004.5999999999999px;height:27px;background:#fafafd;"></div>
<div style="position:absolute;left:127px;top:334px;width:1004.5999999999999px;height:1px;background:#ebe8f0;"></div>
<svg style="position:absolute;left:134.00px;top:316.59px;" width="8.2" height="8.2" viewBox="0 0 24 24" fill="none" stroke="#a862ea" stroke-width="2.4" stroke-linecap="round" stroke-linejoin="round"><path d="M16 21v-2a4 4 0 0 0-4-4H6a4 4 0 0 0-4 4v2"/><circle cx="9" cy="7" r="4"/><path d="M22 21v-2a4 4 0 0 0-3-3.87"/><path d="M16 3.13a4 4 0 0 1 0 7.75"/></svg>
<div style="position:absolute;left:146.40px;top:318px;font-size:7.0px;line-height:7.0px;font-weight:700;color:#232836;white-space:nowrap;transform-origin:0 0;transform:scaleX(0.8720);">Person</div>
<div style="position:absolute;left:228.90px;top:318px;font-size:7.0px;line-height:7.0px;font-weight:700;color:#232836;white-space:nowrap;transform-origin:0 0;transform:scaleX(0.9200);">Kyle Stobaugh</div>
<div style="position:absolute;left:375.50px;top:318px;font-size:7.0px;line-height:7.0px;font-weight:400;color:#6b7280;white-space:nowrap;transform-origin:0 0;transform:scaleX(0.9700);">kyle.stobaugh@epmainc.com</div>
<div style="position:absolute;left:577.6px;top:315.89px;width:41.8px;height:9.6px;border-radius:2.5px;background:#dbeafe;"></div>
<div style="position:absolute;left:581.50px;top:318px;font-size:6.6px;line-height:6.6px;font-weight:700;color:#33508f;white-space:nowrap;transform-origin:0 0;transform:scaleX(0.8382);">Survey Team</div>
<div style="position:absolute;left:744.70px;top:318px;font-size:7.0px;line-height:7.0px;font-weight:400;color:#1f2430;white-space:nowrap;transform-origin:0 0;transform:scaleX(1.0000);">$200/hourly</div>
<div style="position:absolute;left:852.80px;top:318px;font-size:7.0px;line-height:7.0px;font-weight:400;color:#6b7280;white-space:nowrap;transform-origin:0 0;transform:scaleX(0.9500);">DNT Survey</div>
<div style="position:absolute;left:967.2px;top:316.99px;width:25.4px;height:9.9px;border-radius:5px;background:#dcfce7;"></div>
<div style="position:absolute;left:972.40px;top:319px;font-size:6.6px;line-height:6.6px;font-weight:700;color:#166534;white-space:nowrap;transform-origin:0 0;transform:scaleX(0.8341);">active</div>
<svg style="position:absolute;left:1098.20px;top:314.89px;" width="9" height="9" viewBox="0 0 24 24" fill="none" stroke="#9747e0" stroke-width="2" stroke-linecap="round" stroke-linejoin="round"><path d="M17 3a2.85 2.83 0 1 1 4 4L7.5 20.5 2 22l1.5-5.5Z"/><path d="m15 5 4 4"/></svg>
<svg style="position:absolute;left:1112.30px;top:315.09px;" width="8.5" height="8.5" viewBox="0 0 24 24" fill="none" stroke="#d24a4a" stroke-width="2" stroke-linecap="round" stroke-linejoin="round"><path d="M3 6h18"/><path d="M19 6v14c0 1-1 2-2 2H7c-1 0-2-1-2-2V6"/><path d="M8 6V4c0-1 1-2 2-2h4c1 0 2 1 2 2v2"/><line x1="10" x2="10" y1="11" y2="17"/><line x1="14" x2="14" y1="11" y2="17"/></svg>
<div style="position:absolute;left:127px;top:362px;width:1004.5999999999999px;height:1px;background:#ebe8f0;"></div>
<svg style="position:absolute;left:134.00px;top:344.66px;" width="8.2" height="8.2" viewBox="0 0 24 24" fill="none" stroke="#a862ea" stroke-width="2.4" stroke-linecap="round" stroke-linejoin="round"><path d="M16 21v-2a4 4 0 0 0-4-4H6a4 4 0 0 0-4 4v2"/><circle cx="9" cy="7" r="4"/><path d="M22 21v-2a4 4 0 0 0-3-3.87"/><path d="M16 3.13a4 4 0 0 1 0 7.75"/></svg>
<div style="position:absolute;left:146.40px;top:346px;font-size:7.0px;line-height:7.0px;font-weight:700;color:#232836;white-space:nowrap;transform-origin:0 0;transform:scaleX(0.8720);">Person</div>
<div style="position:absolute;left:228.90px;top:346px;font-size:7.0px;line-height:7.0px;font-weight:700;color:#232836;white-space:nowrap;transform-origin:0 0;transform:scaleX(0.9200);">Mrunali Joshi</div>
<div style="position:absolute;left:375.50px;top:346px;font-size:7.0px;line-height:7.0px;font-weight:400;color:#6b7280;white-space:nowrap;transform-origin:0 0;transform:scaleX(0.9700);">jsohi@gmail.com</div>
<div style="position:absolute;left:577.6px;top:343.96px;width:32.8px;height:9.6px;border-radius:2.5px;background:#dbeafe;"></div>
<div style="position:absolute;left:581.50px;top:346px;font-size:6.6px;line-height:6.6px;font-weight:700;color:#33508f;white-space:nowrap;transform-origin:0 0;transform:scaleX(0.8524);">Develope</div>
<div style="position:absolute;left:744.70px;top:346px;font-size:7.0px;line-height:7.0px;font-weight:400;color:#1f2430;white-space:nowrap;transform-origin:0 0;transform:scaleX(1.0000);">$120/hourly</div>
<div style="position:absolute;left:852.80px;top:346px;font-size:7.0px;line-height:7.0px;font-weight:400;color:#6b7280;white-space:nowrap;transform-origin:0 0;transform:scaleX(0.7900);">IT</div>
<div style="position:absolute;left:967.2px;top:345.06px;width:25.4px;height:9.9px;border-radius:5px;background:#dcfce7;"></div>
<div style="position:absolute;left:972.40px;top:347px;font-size:6.6px;line-height:6.6px;font-weight:700;color:#166534;white-space:nowrap;transform-origin:0 0;transform:scaleX(0.8341);">active</div>
<svg style="position:absolute;left:1098.20px;top:342.96px;" width="9" height="9" viewBox="0 0 24 24" fill="none" stroke="#9747e0" stroke-width="2" stroke-linecap="round" stroke-linejoin="round"><path d="M17 3a2.85 2.83 0 1 1 4 4L7.5 20.5 2 22l1.5-5.5Z"/><path d="m15 5 4 4"/></svg>
<svg style="position:absolute;left:1112.30px;top:343.16px;" width="8.5" height="8.5" viewBox="0 0 24 24" fill="none" stroke="#d24a4a" stroke-width="2" stroke-linecap="round" stroke-linejoin="round"><path d="M3 6h18"/><path d="M19 6v14c0 1-1 2-2 2H7c-1 0-2-1-2-2V6"/><path d="M8 6V4c0-1 1-2 2-2h4c1 0 2 1 2 2v2"/><line x1="10" x2="10" y1="11" y2="17"/><line x1="14" x2="14" y1="11" y2="17"/></svg>
<div style="position:absolute;left:127px;top:390px;width:1004.5999999999999px;height:1px;background:#ebe8f0;"></div>
<svg style="position:absolute;left:134.00px;top:372.73px;" width="8.2" height="8.2" viewBox="0 0 24 24" fill="none" stroke="#a862ea" stroke-width="2.4" stroke-linecap="round" stroke-linejoin="round"><path d="M16 21v-2a4 4 0 0 0-4-4H6a4 4 0 0 0-4 4v2"/><circle cx="9" cy="7" r="4"/><path d="M22 21v-2a4 4 0 0 0-3-3.87"/><path d="M16 3.13a4 4 0 0 1 0 7.75"/></svg>
<div style="position:absolute;left:146.40px;top:374px;font-size:7.0px;line-height:7.0px;font-weight:700;color:#232836;white-space:nowrap;transform-origin:0 0;transform:scaleX(0.8720);">Person</div>
<div style="position:absolute;left:228.90px;top:374px;font-size:7.0px;line-height:7.0px;font-weight:700;color:#232836;white-space:nowrap;transform-origin:0 0;transform:scaleX(0.9200);">Parthiv Bhuta</div>
<div style="position:absolute;left:375.50px;top:374px;font-size:7.0px;line-height:7.0px;font-weight:400;color:#6b7280;white-space:nowrap;transform-origin:0 0;transform:scaleX(0.9700);">Parthiv.bhuta@empmainc.com</div>
<div style="position:absolute;left:577.6px;top:372.03px;width:51.6px;height:9.6px;border-radius:2.5px;background:#dbeafe;"></div>
<div style="position:absolute;left:581.50px;top:374px;font-size:6.6px;line-height:6.6px;font-weight:700;color:#33508f;white-space:nowrap;transform-origin:0 0;transform:scaleX(0.8536);">Project Manager</div>
<div style="position:absolute;left:744.70px;top:374px;font-size:7.0px;line-height:7.0px;font-weight:400;color:#1f2430;white-space:nowrap;transform-origin:0 0;transform:scaleX(1.0000);">$78/hourly</div>
<div style="position:absolute;left:852.80px;top:374px;font-size:7.0px;line-height:7.0px;font-weight:400;color:#6b7280;white-space:nowrap;transform-origin:0 0;transform:scaleX(0.7900);">IT</div>
<div style="position:absolute;left:967.2px;top:373.13px;width:25.4px;height:9.9px;border-radius:5px;background:#dcfce7;"></div>
<div style="position:absolute;left:972.40px;top:375px;font-size:6.6px;line-height:6.6px;font-weight:700;color:#166534;white-space:nowrap;transform-origin:0 0;transform:scaleX(0.8341);">active</div>
<svg style="position:absolute;left:1098.20px;top:371.03px;" width="9" height="9" viewBox="0 0 24 24" fill="none" stroke="#9747e0" stroke-width="2" stroke-linecap="round" stroke-linejoin="round"><path d="M17 3a2.85 2.83 0 1 1 4 4L7.5 20.5 2 22l1.5-5.5Z"/><path d="m15 5 4 4"/></svg>
<svg style="position:absolute;left:1112.30px;top:371.23px;" width="8.5" height="8.5" viewBox="0 0 24 24" fill="none" stroke="#d24a4a" stroke-width="2" stroke-linecap="round" stroke-linejoin="round"><path d="M3 6h18"/><path d="M19 6v14c0 1-1 2-2 2H7c-1 0-2-1-2-2V6"/><path d="M8 6V4c0-1 1-2 2-2h4c1 0 2 1 2 2v2"/><line x1="10" x2="10" y1="11" y2="17"/><line x1="14" x2="14" y1="11" y2="17"/></svg>
<div style="position:absolute;left:127px;top:418px;width:1004.5999999999999px;height:1px;background:#ebe8f0;"></div>
<svg style="position:absolute;left:134.00px;top:400.80px;" width="8.2" height="8.2" viewBox="0 0 24 24" fill="none" stroke="#a862ea" stroke-width="2.4" stroke-linecap="round" stroke-linejoin="round"><path d="M16 21v-2a4 4 0 0 0-4-4H6a4 4 0 0 0-4 4v2"/><circle cx="9" cy="7" r="4"/><path d="M22 21v-2a4 4 0 0 0-3-3.87"/><path d="M16 3.13a4 4 0 0 1 0 7.75"/></svg>
<div style="position:absolute;left:146.40px;top:402px;font-size:7.0px;line-height:7.0px;font-weight:700;color:#232836;white-space:nowrap;transform-origin:0 0;transform:scaleX(0.8720);">Person</div>
<div style="position:absolute;left:228.90px;top:402px;font-size:7.0px;line-height:7.0px;font-weight:700;color:#232836;white-space:nowrap;transform-origin:0 0;transform:scaleX(0.9200);">Rakesh Borkar</div>
<div style="position:absolute;left:375.50px;top:402px;font-size:7.0px;line-height:7.0px;font-weight:400;color:#6b7280;white-space:nowrap;transform-origin:0 0;transform:scaleX(0.9700);">RakeshBorkar@epmainc.com</div>
<div style="position:absolute;left:577.6px;top:400.09999999999997px;width:35.5px;height:9.6px;border-radius:2.5px;background:#dbeafe;"></div>
<div style="position:absolute;left:581.50px;top:402px;font-size:6.6px;line-height:6.6px;font-weight:700;color:#33508f;white-space:nowrap;transform-origin:0 0;transform:scaleX(0.8686);">Developer</div>
<div style="position:absolute;left:744.70px;top:402px;font-size:7.0px;line-height:7.0px;font-weight:400;color:#1f2430;white-space:nowrap;transform-origin:0 0;transform:scaleX(1.0000);">$100/hourly</div>
<div style="position:absolute;left:852.80px;top:402px;font-size:7.0px;line-height:7.0px;font-weight:400;color:#6b7280;white-space:nowrap;transform-origin:0 0;transform:scaleX(0.7900);">IT</div>
<div style="position:absolute;left:967.2px;top:401.2px;width:25.4px;height:9.9px;border-radius:5px;background:#dcfce7;"></div>
<div style="position:absolute;left:972.40px;top:403px;font-size:6.6px;line-height:6.6px;font-weight:700;color:#166534;white-space:nowrap;transform-origin:0 0;transform:scaleX(0.8341);">active</div>
<svg style="position:absolute;left:1098.20px;top:399.10px;" width="9" height="9" viewBox="0 0 24 24" fill="none" stroke="#9747e0" stroke-width="2" stroke-linecap="round" stroke-linejoin="round"><path d="M17 3a2.85 2.83 0 1 1 4 4L7.5 20.5 2 22l1.5-5.5Z"/><path d="m15 5 4 4"/></svg>
<svg style="position:absolute;left:1112.30px;top:399.30px;" width="8.5" height="8.5" viewBox="0 0 24 24" fill="none" stroke="#d24a4a" stroke-width="2" stroke-linecap="round" stroke-linejoin="round"><path d="M3 6h18"/><path d="M19 6v14c0 1-1 2-2 2H7c-1 0-2-1-2-2V6"/><path d="M8 6V4c0-1 1-2 2-2h4c1 0 2 1 2 2v2"/><line x1="10" x2="10" y1="11" y2="17"/><line x1="14" x2="14" y1="11" y2="17"/></svg>
<div style="position:absolute;left:127px;top:446px;width:1004.5999999999999px;height:1px;background:#ebe8f0;"></div>
<svg style="position:absolute;left:134.00px;top:428.87px;" width="8.2" height="8.2" viewBox="0 0 24 24" fill="none" stroke="#a862ea" stroke-width="2.4" stroke-linecap="round" stroke-linejoin="round"><path d="M16 21v-2a4 4 0 0 0-4-4H6a4 4 0 0 0-4 4v2"/><circle cx="9" cy="7" r="4"/><path d="M22 21v-2a4 4 0 0 0-3-3.87"/><path d="M16 3.13a4 4 0 0 1 0 7.75"/></svg>
<div style="position:absolute;left:146.40px;top:430px;font-size:7.0px;line-height:7.0px;font-weight:700;color:#232836;white-space:nowrap;transform-origin:0 0;transform:scaleX(0.8720);">Person</div>
<div style="position:absolute;left:228.90px;top:430px;font-size:7.0px;line-height:7.0px;font-weight:700;color:#232836;white-space:nowrap;transform-origin:0 0;transform:scaleX(0.9200);">Rakesh Jaiswal</div>
<div style="position:absolute;left:375.50px;top:430px;font-size:7.0px;line-height:7.0px;font-weight:400;color:#6b7280;white-space:nowrap;transform-origin:0 0;transform:scaleX(0.9700);">rakesh.jaiswal@epmainc.com</div>
<div style="position:absolute;left:577.6px;top:428.16999999999996px;width:53.8px;height:9.6px;border-radius:2.5px;background:#dbeafe;"></div>
<div style="position:absolute;left:581.50px;top:430px;font-size:6.6px;line-height:6.6px;font-weight:700;color:#33508f;white-space:nowrap;transform-origin:0 0;transform:scaleX(0.8482);">Senior Developer</div>
<div style="position:absolute;left:744.70px;top:430px;font-size:7.0px;line-height:7.0px;font-weight:400;color:#1f2430;white-space:nowrap;transform-origin:0 0;transform:scaleX(1.0000);">$109/hourly</div>
<div style="position:absolute;left:852.80px;top:430px;font-size:7.0px;line-height:7.0px;font-weight:400;color:#6b7280;white-space:nowrap;transform-origin:0 0;transform:scaleX(0.7900);">IT</div>
<div style="position:absolute;left:967.2px;top:429.27px;width:25.4px;height:9.9px;border-radius:5px;background:#dcfce7;"></div>
<div style="position:absolute;left:972.40px;top:431px;font-size:6.6px;line-height:6.6px;font-weight:700;color:#166534;white-space:nowrap;transform-origin:0 0;transform:scaleX(0.8341);">active</div>
<svg style="position:absolute;left:1098.20px;top:427.17px;" width="9" height="9" viewBox="0 0 24 24" fill="none" stroke="#9747e0" stroke-width="2" stroke-linecap="round" stroke-linejoin="round"><path d="M17 3a2.85 2.83 0 1 1 4 4L7.5 20.5 2 22l1.5-5.5Z"/><path d="m15 5 4 4"/></svg>
<svg style="position:absolute;left:1112.30px;top:427.37px;" width="8.5" height="8.5" viewBox="0 0 24 24" fill="none" stroke="#d24a4a" stroke-width="2" stroke-linecap="round" stroke-linejoin="round"><path d="M3 6h18"/><path d="M19 6v14c0 1-1 2-2 2H7c-1 0-2-1-2-2V6"/><path d="M8 6V4c0-1 1-2 2-2h4c1 0 2 1 2 2v2"/><line x1="10" x2="10" y1="11" y2="17"/><line x1="14" x2="14" y1="11" y2="17"/></svg>
<div style="position:absolute;left:127px;top:475px;width:1004.5999999999999px;height:1px;background:#ebe8f0;"></div>
<svg style="position:absolute;left:134.00px;top:456.94px;" width="8.2" height="8.2" viewBox="0 0 24 24" fill="none" stroke="#a862ea" stroke-width="2.4" stroke-linecap="round" stroke-linejoin="round"><path d="M16 21v-2a4 4 0 0 0-4-4H6a4 4 0 0 0-4 4v2"/><circle cx="9" cy="7" r="4"/><path d="M22 21v-2a4 4 0 0 0-3-3.87"/><path d="M16 3.13a4 4 0 0 1 0 7.75"/></svg>
<div style="position:absolute;left:146.40px;top:458px;font-size:7.0px;line-height:7.0px;font-weight:700;color:#232836;white-space:nowrap;transform-origin:0 0;transform:scaleX(0.8720);">Person</div>
<div style="position:absolute;left:228.90px;top:458px;font-size:7.0px;line-height:7.0px;font-weight:700;color:#232836;white-space:nowrap;transform-origin:0 0;transform:scaleX(0.9200);">Santosh Sharma</div>
<div style="position:absolute;left:375.50px;top:458px;font-size:7.0px;line-height:7.0px;font-weight:400;color:#6b7280;white-space:nowrap;transform-origin:0 0;transform:scaleX(0.9700);">sharma@gmail.com</div>
<div style="position:absolute;left:577.6px;top:456.24px;width:35.5px;height:9.6px;border-radius:2.5px;background:#dbeafe;"></div>
<div style="position:absolute;left:581.50px;top:458px;font-size:6.6px;line-height:6.6px;font-weight:700;color:#33508f;white-space:nowrap;transform-origin:0 0;transform:scaleX(0.8686);">Developer</div>
<div style="position:absolute;left:744.70px;top:458px;font-size:7.0px;line-height:7.0px;font-weight:400;color:#1f2430;white-space:nowrap;transform-origin:0 0;transform:scaleX(1.0000);">$120/hourly</div>
<div style="position:absolute;left:852.80px;top:458px;font-size:7.0px;line-height:7.0px;font-weight:400;color:#6b7280;white-space:nowrap;transform-origin:0 0;transform:scaleX(0.7900);">IT</div>
<div style="position:absolute;left:967.2px;top:457.34000000000003px;width:25.4px;height:9.9px;border-radius:5px;background:#dcfce7;"></div>
<div style="position:absolute;left:972.40px;top:460px;font-size:6.6px;line-height:6.6px;font-weight:700;color:#166534;white-space:nowrap;transform-origin:0 0;transform:scaleX(0.8341);">active</div>
<svg style="position:absolute;left:1098.20px;top:455.24px;" width="9" height="9" viewBox="0 0 24 24" fill="none" stroke="#9747e0" stroke-width="2" stroke-linecap="round" stroke-linejoin="round"><path d="M17 3a2.85 2.83 0 1 1 4 4L7.5 20.5 2 22l1.5-5.5Z"/><path d="m15 5 4 4"/></svg>
<svg style="position:absolute;left:1112.30px;top:455.44px;" width="8.5" height="8.5" viewBox="0 0 24 24" fill="none" stroke="#d24a4a" stroke-width="2" stroke-linecap="round" stroke-linejoin="round"><path d="M3 6h18"/><path d="M19 6v14c0 1-1 2-2 2H7c-1 0-2-1-2-2V6"/><path d="M8 6V4c0-1 1-2 2-2h4c1 0 2 1 2 2v2"/><line x1="10" x2="10" y1="11" y2="17"/><line x1="14" x2="14" y1="11" y2="17"/></svg>
<div style="position:absolute;left:127px;top:503px;width:1004.5999999999999px;height:1px;background:#ebe8f0;"></div>
<svg style="position:absolute;left:134.00px;top:485.01px;" width="8.2" height="8.2" viewBox="0 0 24 24" fill="none" stroke="#a862ea" stroke-width="2.4" stroke-linecap="round" stroke-linejoin="round"><path d="M16 21v-2a4 4 0 0 0-4-4H6a4 4 0 0 0-4 4v2"/><circle cx="9" cy="7" r="4"/><path d="M22 21v-2a4 4 0 0 0-3-3.87"/><path d="M16 3.13a4 4 0 0 1 0 7.75"/></svg>
<div style="position:absolute;left:146.40px;top:486px;font-size:7.0px;line-height:7.0px;font-weight:700;color:#232836;white-space:nowrap;transform-origin:0 0;transform:scaleX(0.8720);">Person</div>
<div style="position:absolute;left:228.90px;top:486px;font-size:7.0px;line-height:7.0px;font-weight:700;color:#232836;white-space:nowrap;transform-origin:0 0;transform:scaleX(0.9200);">Siddhart Chandekar</div>
<div style="position:absolute;left:375.50px;top:486px;font-size:7.0px;line-height:7.0px;font-weight:400;color:#6b7280;white-space:nowrap;transform-origin:0 0;transform:scaleX(0.9700);">chandekar@gmail.com</div>
<div style="position:absolute;left:577.6px;top:484.31px;width:35.5px;height:9.6px;border-radius:2.5px;background:#dbeafe;"></div>
<div style="position:absolute;left:581.50px;top:487px;font-size:6.6px;line-height:6.6px;font-weight:700;color:#33508f;white-space:nowrap;transform-origin:0 0;transform:scaleX(0.8686);">Developer</div>
<div style="position:absolute;left:744.70px;top:486px;font-size:7.0px;line-height:7.0px;font-weight:400;color:#1f2430;white-space:nowrap;transform-origin:0 0;transform:scaleX(1.0000);">$120/hourly</div>
<div style="position:absolute;left:852.80px;top:486px;font-size:7.0px;line-height:7.0px;font-weight:400;color:#6b7280;white-space:nowrap;transform-origin:0 0;transform:scaleX(0.7900);">IT</div>
<div style="position:absolute;left:967.2px;top:485.41px;width:25.4px;height:9.9px;border-radius:5px;background:#dcfce7;"></div>
<div style="position:absolute;left:972.40px;top:488px;font-size:6.6px;line-height:6.6px;font-weight:700;color:#166534;white-space:nowrap;transform-origin:0 0;transform:scaleX(0.8341);">active</div>
<svg style="position:absolute;left:1098.20px;top:483.31px;" width="9" height="9" viewBox="0 0 24 24" fill="none" stroke="#9747e0" stroke-width="2" stroke-linecap="round" stroke-linejoin="round"><path d="M17 3a2.85 2.83 0 1 1 4 4L7.5 20.5 2 22l1.5-5.5Z"/><path d="m15 5 4 4"/></svg>
<svg style="position:absolute;left:1112.30px;top:483.51px;" width="8.5" height="8.5" viewBox="0 0 24 24" fill="none" stroke="#d24a4a" stroke-width="2" stroke-linecap="round" stroke-linejoin="round"><path d="M3 6h18"/><path d="M19 6v14c0 1-1 2-2 2H7c-1 0-2-1-2-2V6"/><path d="M8 6V4c0-1 1-2 2-2h4c1 0 2 1 2 2v2"/><line x1="10" x2="10" y1="11" y2="17"/><line x1="14" x2="14" y1="11" y2="17"/></svg>
<div style="position:absolute;left:127px;top:531px;width:1004.5999999999999px;height:1px;background:#ebe8f0;"></div>
<svg style="position:absolute;left:134.00px;top:513.08px;" width="8.2" height="8.2" viewBox="0 0 24 24" fill="none" stroke="#a862ea" stroke-width="2.4" stroke-linecap="round" stroke-linejoin="round"><path d="M16 21v-2a4 4 0 0 0-4-4H6a4 4 0 0 0-4 4v2"/><circle cx="9" cy="7" r="4"/><path d="M22 21v-2a4 4 0 0 0-3-3.87"/><path d="M16 3.13a4 4 0 0 1 0 7.75"/></svg>
<div style="position:absolute;left:146.40px;top:514px;font-size:7.0px;line-height:7.0px;font-weight:700;color:#232836;white-space:nowrap;transform-origin:0 0;transform:scaleX(0.8720);">Person</div>
<div style="position:absolute;left:228.90px;top:514px;font-size:7.0px;line-height:7.0px;font-weight:700;color:#232836;white-space:nowrap;transform-origin:0 0;transform:scaleX(0.9200);">Swarup Pusalkar</div>
<div style="position:absolute;left:375.50px;top:514px;font-size:7.0px;line-height:7.0px;font-weight:400;color:#6b7280;white-space:nowrap;transform-origin:0 0;transform:scaleX(0.9700);">Swarup@gmail.com</div>
<div style="position:absolute;left:577.6px;top:512.38px;width:53.8px;height:9.6px;border-radius:2.5px;background:#dbeafe;"></div>
<div style="position:absolute;left:581.50px;top:515px;font-size:6.6px;line-height:6.6px;font-weight:700;color:#33508f;white-space:nowrap;transform-origin:0 0;transform:scaleX(0.8482);">Senior Developer</div>
<div style="position:absolute;left:744.70px;top:514px;font-size:7.0px;line-height:7.0px;font-weight:400;color:#1f2430;white-space:nowrap;transform-origin:0 0;transform:scaleX(1.0000);">$100/hourly</div>
<div style="position:absolute;left:852.80px;top:514px;font-size:7.0px;line-height:7.0px;font-weight:400;color:#6b7280;white-space:nowrap;transform-origin:0 0;transform:scaleX(0.7900);">IT</div>
<div style="position:absolute;left:967.2px;top:513.48px;width:25.4px;height:9.9px;border-radius:5px;background:#dcfce7;"></div>
<div style="position:absolute;left:972.40px;top:516px;font-size:6.6px;line-height:6.6px;font-weight:700;color:#166534;white-space:nowrap;transform-origin:0 0;transform:scaleX(0.8341);">active</div>
<svg style="position:absolute;left:1098.20px;top:511.38px;" width="9" height="9" viewBox="0 0 24 24" fill="none" stroke="#9747e0" stroke-width="2" stroke-linecap="round" stroke-linejoin="round"><path d="M17 3a2.85 2.83 0 1 1 4 4L7.5 20.5 2 22l1.5-5.5Z"/><path d="m15 5 4 4"/></svg>
<svg style="position:absolute;left:1112.30px;top:511.58px;" width="8.5" height="8.5" viewBox="0 0 24 24" fill="none" stroke="#d24a4a" stroke-width="2" stroke-linecap="round" stroke-linejoin="round"><path d="M3 6h18"/><path d="M19 6v14c0 1-1 2-2 2H7c-1 0-2-1-2-2V6"/><path d="M8 6V4c0-1 1-2 2-2h4c1 0 2 1 2 2v2"/><line x1="10" x2="10" y1="11" y2="17"/><line x1="14" x2="14" y1="11" y2="17"/></svg>
<div style="position:absolute;left:127px;top:559px;width:1004.5999999999999px;height:1px;background:#ebe8f0;"></div>
<svg style="position:absolute;left:134.00px;top:541.15px;" width="8.2" height="8.2" viewBox="0 0 24 24" fill="none" stroke="#a862ea" stroke-width="2.4" stroke-linecap="round" stroke-linejoin="round"><path d="M16 21v-2a4 4 0 0 0-4-4H6a4 4 0 0 0-4 4v2"/><circle cx="9" cy="7" r="4"/><path d="M22 21v-2a4 4 0 0 0-3-3.87"/><path d="M16 3.13a4 4 0 0 1 0 7.75"/></svg>
<div style="position:absolute;left:146.40px;top:542px;font-size:7.0px;line-height:7.0px;font-weight:700;color:#232836;white-space:nowrap;transform-origin:0 0;transform:scaleX(0.8720);">Person</div>
<div style="position:absolute;left:228.90px;top:542px;font-size:7.0px;line-height:7.0px;font-weight:700;color:#232836;white-space:nowrap;transform-origin:0 0;transform:scaleX(0.9200);">Trae Cobern</div>
<div style="position:absolute;left:375.50px;top:542px;font-size:7.0px;line-height:7.0px;font-weight:400;color:#6b7280;white-space:nowrap;transform-origin:0 0;transform:scaleX(0.9700);">Trae.cobern@epmainc.com</div>
<div style="position:absolute;left:577.6px;top:540.45px;width:41.8px;height:9.6px;border-radius:2.5px;background:#dbeafe;"></div>
<div style="position:absolute;left:581.50px;top:543px;font-size:6.6px;line-height:6.6px;font-weight:700;color:#33508f;white-space:nowrap;transform-origin:0 0;transform:scaleX(0.8382);">Survey Team</div>
<div style="position:absolute;left:744.70px;top:542px;font-size:7.0px;line-height:7.0px;font-weight:400;color:#1f2430;white-space:nowrap;transform-origin:0 0;transform:scaleX(1.0000);">$64/hourly</div>
<div style="position:absolute;left:852.80px;top:542px;font-size:7.0px;line-height:7.0px;font-weight:400;color:#6b7280;white-space:nowrap;transform-origin:0 0;transform:scaleX(0.9500);">DNT</div>
<div style="position:absolute;left:967.2px;top:541.55px;width:25.4px;height:9.9px;border-radius:5px;background:#dcfce7;"></div>
<div style="position:absolute;left:972.40px;top:544px;font-size:6.6px;line-height:6.6px;font-weight:700;color:#166534;white-space:nowrap;transform-origin:0 0;transform:scaleX(0.8341);">active</div>
<svg style="position:absolute;left:1098.20px;top:539.45px;" width="9" height="9" viewBox="0 0 24 24" fill="none" stroke="#9747e0" stroke-width="2" stroke-linecap="round" stroke-linejoin="round"><path d="M17 3a2.85 2.83 0 1 1 4 4L7.5 20.5 2 22l1.5-5.5Z"/><path d="m15 5 4 4"/></svg>
<svg style="position:absolute;left:1112.30px;top:539.65px;" width="8.5" height="8.5" viewBox="0 0 24 24" fill="none" stroke="#d24a4a" stroke-width="2" stroke-linecap="round" stroke-linejoin="round"><path d="M3 6h18"/><path d="M19 6v14c0 1-1 2-2 2H7c-1 0-2-1-2-2V6"/><path d="M8 6V4c0-1 1-2 2-2h4c1 0 2 1 2 2v2"/><line x1="10" x2="10" y1="11" y2="17"/><line x1="14" x2="14" y1="11" y2="17"/></svg>
<div style="position:absolute;left:127px;top:587px;width:1004.5999999999999px;height:1px;background:#ebe8f0;"></div>
<svg style="position:absolute;left:134.00px;top:569.22px;" width="8.2" height="8.2" viewBox="0 0 24 24" fill="none" stroke="#a862ea" stroke-width="2.4" stroke-linecap="round" stroke-linejoin="round"><path d="M16 21v-2a4 4 0 0 0-4-4H6a4 4 0 0 0-4 4v2"/><circle cx="9" cy="7" r="4"/><path d="M22 21v-2a4 4 0 0 0-3-3.87"/><path d="M16 3.13a4 4 0 0 1 0 7.75"/></svg>
<div style="position:absolute;left:146.40px;top:571px;font-size:7.0px;line-height:7.0px;font-weight:700;color:#232836;white-space:nowrap;transform-origin:0 0;transform:scaleX(0.8720);">Person</div>
<div style="position:absolute;left:228.90px;top:571px;font-size:7.0px;line-height:7.0px;font-weight:700;color:#232836;white-space:nowrap;transform-origin:0 0;transform:scaleX(0.9200);">Vrijesh Singh</div>
<div style="position:absolute;left:375.50px;top:571px;font-size:7.0px;line-height:7.0px;font-weight:400;color:#6b7280;white-space:nowrap;transform-origin:0 0;transform:scaleX(0.9700);">vrijesh.singh@epmainc.com</div>
<div style="position:absolute;left:577.6px;top:568.5200000000001px;width:53.8px;height:9.6px;border-radius:2.5px;background:#dbeafe;"></div>
<div style="position:absolute;left:581.50px;top:571px;font-size:6.6px;line-height:6.6px;font-weight:700;color:#33508f;white-space:nowrap;transform-origin:0 0;transform:scaleX(0.8482);">Senior Developer</div>
<div style="position:absolute;left:744.70px;top:571px;font-size:7.0px;line-height:7.0px;font-weight:400;color:#1f2430;white-space:nowrap;transform-origin:0 0;transform:scaleX(1.0000);">$655/hourly</div>
<div style="position:absolute;left:852.80px;top:571px;font-size:7.0px;line-height:7.0px;font-weight:400;color:#6b7280;white-space:nowrap;transform-origin:0 0;transform:scaleX(0.7900);">IT</div>
<div style="position:absolute;left:967.2px;top:569.62px;width:25.4px;height:9.9px;border-radius:5px;background:#dcfce7;"></div>
<div style="position:absolute;left:972.40px;top:572px;font-size:6.6px;line-height:6.6px;font-weight:700;color:#166534;white-space:nowrap;transform-origin:0 0;transform:scaleX(0.8341);">active</div>
<svg style="position:absolute;left:1098.20px;top:567.52px;" width="9" height="9" viewBox="0 0 24 24" fill="none" stroke="#9747e0" stroke-width="2" stroke-linecap="round" stroke-linejoin="round"><path d="M17 3a2.85 2.83 0 1 1 4 4L7.5 20.5 2 22l1.5-5.5Z"/><path d="m15 5 4 4"/></svg>
<svg style="position:absolute;left:1112.30px;top:567.72px;" width="8.5" height="8.5" viewBox="0 0 24 24" fill="none" stroke="#d24a4a" stroke-width="2" stroke-linecap="round" stroke-linejoin="round"><path d="M3 6h18"/><path d="M19 6v14c0 1-1 2-2 2H7c-1 0-2-1-2-2V6"/><path d="M8 6V4c0-1 1-2 2-2h4c1 0 2 1 2 2v2"/><line x1="10" x2="10" y1="11" y2="17"/><line x1="14" x2="14" y1="11" y2="17"/></svg>
<div style="position:absolute;left:118px;top:60.7px;width:13px;height:13px;border-radius:50%;background:#7a2fc0;z-index:5;"></div>
<svg style="position:absolute;left:120.20px;top:63.40px;z-index:6;" width="7.5" height="7.5" viewBox="0 0 24 24" fill="none" stroke="#e2c8fa" stroke-width="2.6" stroke-linecap="round" stroke-linejoin="round"><path d="m15 18-6-6 6-6"/></svg>
</body></html>
